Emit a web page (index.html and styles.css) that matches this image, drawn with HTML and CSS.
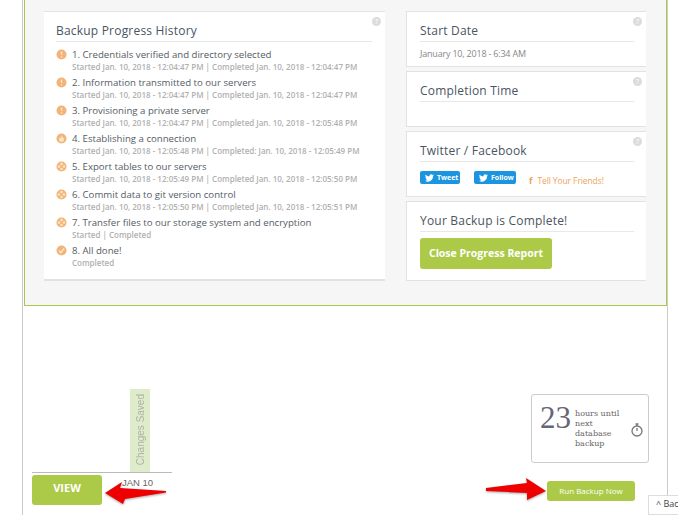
FILE: index.html
```html
<!DOCTYPE html>
<html lang="en">
<head>
<meta charset="utf-8">
<title>Backup Progress</title>
<link rel="stylesheet" href="styles.css">
</head>
<body>
<div class="page">
  <div class="frame">
    <section class="report">
      <div class="card history">
        <span class="help">?</span>
        <h2>Backup Progress History</h2>
        <ul class="steps">
          <li><svg class="ico" viewBox="0 0 12 12"><circle cx="6" cy="6" r="5.5"/><path class="w" d="M5.3 2.6h1.4v4H5.300zM5.300 7.800h1.400v1.500H5.300z"/></svg><div><p class="t">1. Credentials verified and directory selected</p><p class="s">Started Jan. 10, 2018 - 12:04:47 PM | Completed Jan. 10, 2018 - 12:04:47 PM</p></div></li>
          <li><svg class="ico" viewBox="0 0 12 12"><circle cx="6" cy="6" r="5.5"/><path class="w" d="M5.3 2.6h1.4v4H5.300zM5.300 7.800h1.400v1.500H5.300z"/></svg><div><p class="t">2. Information transmitted to our servers</p><p class="s">Started Jan. 10, 2018 - 12:04:47 PM | Completed Jan. 10, 2018 - 12:04:47 PM</p></div></li>
          <li><svg class="ico" viewBox="0 0 12 12"><circle cx="6" cy="6" r="5.5"/><path class="w" d="M5.3 2.6h1.4v4H5.300zM5.300 7.800h1.400v1.500H5.300z"/></svg><div><p class="t">3. Provisioning a private server</p><p class="s">Started Jan. 10, 2018 - 12:04:47 PM | Completed Jan. 10, 2018 - 12:05:48 PM</p></div></li>
          <li><svg class="ico" viewBox="0 0 12 12"><circle cx="6" cy="6" r="5.5"/><path class="w" d="M6 2.500C6.500 4 8.800 5 8.800 7a2.800 2.600 0 0 1-5.600 0C3.200 5.800 4 5.200 4.500 4.500 5 5 5.200 5.300 5.400 5.500 5.800 4.800 6 3.500 6 2.500z"/></svg><div><p class="t">4. Establishing a connection</p><p class="s">Started Jan. 10, 2018 - 12:05:48 PM | Completed: Jan. 10, 2018 - 12:05:49 PM</p></div></li>
          <li><svg class="ico" viewBox="0 0 12 12"><circle cx="6" cy="6" r="5.5"/><g class="w"><circle cx="6" cy="3.300" r="1.400"/><circle cx="6" cy="8.700" r="1.400"/><circle cx="3.300" cy="6" r="1.400"/><circle cx="8.700" cy="6" r="1.400"/></g></svg><div><p class="t">5. Export tables to our servers</p><p class="s">Started Jan. 10, 2018 - 12:05:49 PM | Completed Jan. 10, 2018 - 12:05:50 PM</p></div></li>
          <li><svg class="ico" viewBox="0 0 12 12"><circle cx="6" cy="6" r="5.5"/><g class="w"><circle cx="6" cy="3.300" r="1.400"/><circle cx="6" cy="8.700" r="1.400"/><circle cx="3.300" cy="6" r="1.400"/><circle cx="8.700" cy="6" r="1.400"/></g></svg><div><p class="t">6. Commit data to git version control</p><p class="s">Started Jan. 10, 2018 - 12:05:50 PM | Completed Jan. 10, 2018 - 12:05:51 PM</p></div></li>
          <li><svg class="ico" viewBox="0 0 12 12"><circle cx="6" cy="6" r="5.5"/><g class="w"><circle cx="6" cy="3.300" r="1.400"/><circle cx="6" cy="8.700" r="1.400"/><circle cx="3.300" cy="6" r="1.400"/><circle cx="8.700" cy="6" r="1.400"/></g></svg><div><p class="t">7. Transfer files to our storage system and encryption</p><p class="s">Started | Completed</p></div></li>
          <li><svg class="ico" viewBox="0 0 12 12"><circle cx="6" cy="6" r="5.5"/><path class="ck" d="M3.300 6.200l2 2.200 3.500-4.800"/></svg><div><p class="t">8. All done!</p><p class="s">Completed</p></div></li>
        </ul>
      </div>
      <div class="side">
        <div class="card info">
          <span class="help">?</span>
          <h2>Start Date</h2>
          <p class="date">January 10, 2018 - 6:34 AM</p>
        </div>
        <div class="card info">
          <span class="help">?</span>
          <h2>Completion Time</h2>
        </div>
        <div class="card info social">
          <span class="help">?</span>
          <h2>Twitter / Facebook</h2>
          <div class="share">
            <a class="tw tweet"><svg viewBox="0 0 16 13"><path d="M16 1.500c-.6.300-1.200.400-1.900.500.700-.4 1.200-1 1.400-1.800-.6.400-1.300.600-2.100.800A3.300 3.300 0 0 0 7.800 3.800 9.300 9.300 0 0 1 1.100.6a3.300 3.300 0 0 0 1 4.400c-.5 0-1-.2-1.500-.4 0 1.600 1.100 2.900 2.600 3.200-.5.100-1 .2-1.500.1.400 1.300 1.600 2.200 3.100 2.300A6.600 6.600 0 0 1 0 11.500 9.300 9.300 0 0 0 14.400 3.300c.6-.5 1.200-1.100 1.600-1.800z"/></svg>Tweet</a>
            <a class="tw follow"><svg viewBox="0 0 16 13"><path d="M16 1.500c-.6.300-1.200.400-1.900.500.700-.4 1.200-1 1.400-1.800-.6.400-1.300.600-2.100.800A3.300 3.300 0 0 0 7.800 3.800 9.300 9.300 0 0 1 1.100.6a3.300 3.300 0 0 0 1 4.400c-.5 0-1-.2-1.500-.4 0 1.600 1.100 2.900 2.600 3.200-.5.100-1 .2-1.500.1.400 1.300 1.600 2.200 3.100 2.300A6.600 6.600 0 0 1 0 11.500 9.300 9.300 0 0 0 14.400 3.300c.6-.5 1.200-1.100 1.600-1.800z"/></svg>Follow</a>
            <a class="fb"><b>f</b>Tell Your Friends!</a>
          </div>
        </div>
        <div class="card info done">
          <h2>Your Backup is Complete!</h2>
          <a class="close">Close Progress Report</a>
        </div>
      </div>
    </section>
    <section class="lower">
      <div class="chart">
        <div class="plot"><span class="bar"><span class="bar-label">Changes Saved</span></span></div>
        <div class="axis">
          <a class="view">VIEW</a>
          <span class="tick">JAN 10</span>
        </div>
        <svg class="arrow arrow-l" viewBox="0 0 62 26"><path d="M0 13 17 2 15 8 61 11 61 12.500 20 19 18 24z"/></svg>
      </div>
      <div class="run">
        <div class="timer">
          <span class="num">23</span>
          <span class="until">hours until next database backup</span>
          <svg class="clock" viewBox="0 0 12 14"><circle cx="6" cy="8" r="5"/><path d="M6 8V5M4.500 1h3M6 1v2"/></svg>
        </div>
        <a class="runbtn">Run Backup Now</a>
        <svg class="arrow arrow-r" viewBox="0 0 62 26"><path d="M0 12 41 7 40 2 60 15 41 24 41 17 0 15z"/></svg>
      </div>
    </section>
  </div>
  <div class="back">^ Back</div>
</div>
</body>
</html>
```
FILE: styles.css
```css
* { box-sizing: border-box; }
html, body { margin: 0; padding: 0; }
body {
  background: #fff;
  font-family: "Open Sans", sans-serif;
  overflow: hidden;
  width: 678px;
  height: 515px;
}
p, h2, ul { margin: 0; padding: 0; list-style: none; }
.page { position: relative; height: 515px; overflow: hidden; padding-left: 22px; padding-right: 10px; }
.frame {
  width: 646px;
  height: 515px;
  border-left: 1px solid #ccc;
  border-right: 1px solid #ccc;
}
.report {
  display: flex;
  gap: 21px;
  width: 643px;
  height: 306px;
  margin-left: 1px;
  padding: 11px 20px 0 19px;
  background: #f6f6f6;
  border: 1px solid #a9c94a;
  border-width: 0 1px 1px 1px;
}
.card {
  position: relative;
  background: #fff;
  border: 1px solid #e2e2e2;
}
.history {
  width: 341px;
  height: 270px;
  padding: 10px 13px 0 12px;
  border-width: 1px 0 2px 0;
}
.side { display: flex; flex-direction: column; gap: 4px; width: 240px; }
.info { padding: 10px 12px 0 13px; height: 56px; border-width: 1px 0 1px 1px; }
.social { height: 66px; }
.done { height: 80px; }
.help {
  position: absolute;
  top: 5px;
  right: 4px;
  width: 9px;
  height: 9px;
  border-radius: 50%;
  background: #dcdcdc;
  color: #fff;
  font-size: 7px;
  line-height: 9px;
  text-align: center;
}
h2 {
  font-size: 12px;
  font-weight: 400;
  line-height: 18px;
  height: 20px;
  color: #4a5563;
  border-bottom: 1px solid #e8e8e8;
  letter-spacing: .2px;
}
.steps { margin-top: 7px; }
.steps li { display: flex; gap: 5px; height: 28px; }
.ico { width: 11px; height: 11px; flex: none; }
.ico circle { fill: #f2b478; }
.ico .w, .ico .w circle { fill: #fbe3c6; }
.ico .ck { fill: none; stroke: #fbe9d4; stroke-width: 1.500; }
.t { font-size: 9.650px; line-height: 12px; color: #555c66; white-space: nowrap; }
.s { font-size: 8px; line-height: 12px; color: #b0b0b0; font-weight: 600; white-space: nowrap; }
.date { font-size: 9px; line-height: 12px; color: #888; margin-top: 6px; letter-spacing: -.2px; }
.share { display: flex; align-items: flex-start; margin-top: 9px; }
.tw {
  display: flex;
  align-items: center;
  gap: 3px;
  height: 13px;
  background: #1b95e0;
  color: #fff;
  font-size: 7px;
  font-weight: 700;
  border-radius: 2px;
  padding-left: 5px;
}
.tw svg { width: 9px; height: 8px; fill: #fff; }
.tweet { width: 40px; margin-right: 14px; }
.follow { width: 42px; margin-right: 13px; }
.fb { color: #eda45a; font-size: 8.500px; margin-top: 3px; letter-spacing: -.1px; }
.fb b { margin-right: 5px; font-weight: 700; font-size: 9px; }
.close {
  display: inline-block;
  margin-top: 6px;
  width: 132px;
  height: 31px;
  border-radius: 3px;
  background: #acca48;
  color: #fff;
  font-size: 10.500px;
  font-weight: 700;
  line-height: 31px;
  text-align: center;
}
.lower { position: relative; display: flex; justify-content: space-between; padding: 83px 18px 0 9px; }
.chart { position: relative; width: 140px; }
.plot { height: 84px; display: flex; padding-left: 98px; border-bottom: 1px solid #bbb; }
.bar { width: 20px; height: 83px; background: #dfeccb; display: flex; align-items: center; justify-content: center; }
.bar-label {
  writing-mode: vertical-rl;
  transform: rotate(180deg);
  font-family: "Liberation Sans", sans-serif;
  font-size: 10px;
  color: #aeb2a4;
  white-space: nowrap;
  margin-top: -2px;
}
.axis { display: flex; align-items: flex-start; }
.view {
  width: 70px;
  height: 30px;
  margin-top: 2px;
  border-radius: 3px;
  background: #acca48;
  color: #fff;
  font-weight: 700;
  font-size: 11px;
  line-height: 26px;
  text-align: center;
}
.tick { font-family: "Liberation Sans", sans-serif; font-size: 9.500px; color: #666; margin-left: 20px; line-height: 19px; }
.arrow { position: absolute; width: 62px; height: 26px; fill: #ee0000; filter: drop-shadow(0 1px 1px rgba(0, 0, 0, .35)); }
.arrow-l { left: 73px; top: 91px; }
.run { position: relative; display: flex; flex-direction: column; align-items: flex-end; width: 118px; padding-top: 5px; }
.timer {
  display: flex;
  align-items: center;
  width: 118px;
  height: 69px;
  border: 1px solid #ccc;
  border-radius: 3px;
  padding: 0 5px 0 8px;
  font-family: "Liberation Serif", serif;
  position: relative;
}
.num { font-size: 31px; color: #667; line-height: 1; margin-right: 4px; flex: none; margin-top: -22px; }
.until { font-family: "DejaVu Serif", serif; font-size: 8px; line-height: 10px; color: #666; width: 50px; flex: none; }
.clock { width: 12px; height: 14px; fill: none; stroke: #777; stroke-width: 1.300; flex: none; margin-left: 6px; margin-top: 2px; }
.runbtn {
  display: block;
  width: 88px;
  height: 20px;
  margin-top: 18px;
  margin-right: 14px;
  border-radius: 3px;
  background: #acca48;
  color: #fff;
  font-size: 8px;
  line-height: 20px;
  text-align: center;
}
.arrow-r { left: -45px; top: 87px; }
.back {
  position: absolute;
  top: 495px;
  left: 648px;
  width: 40px;
  height: 20px;
  background: #fff;
  border: 1px solid #ddd;
  font-size: 9px;
  line-height: 15px;
  color: #444;
  padding-left: 7px;
  white-space: nowrap;
}
```
